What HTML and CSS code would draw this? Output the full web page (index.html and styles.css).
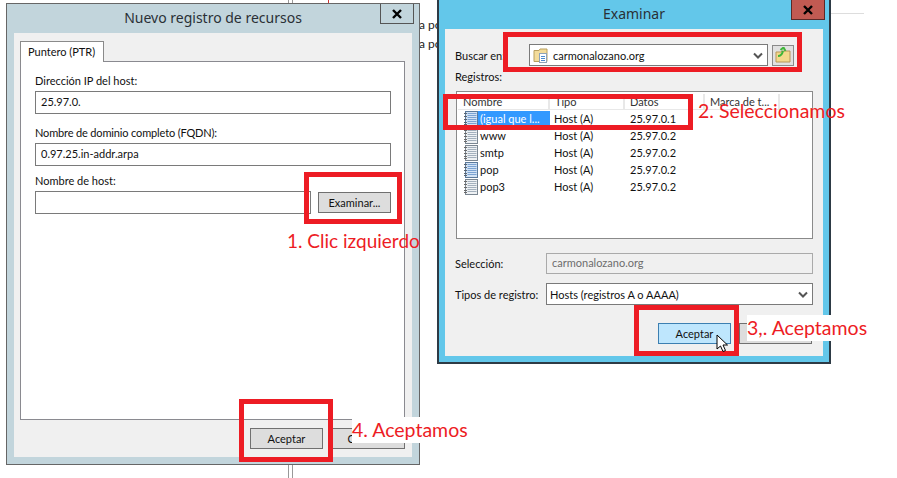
FILE: index.html
```html
<!DOCTYPE html>
<html lang="es">
<head>
<meta charset="UTF-8" />
<meta name="viewport" content="width=device-width, initial-scale=1" />
<title>Nuevo registro de recursos</title>
<link rel="stylesheet" href="styles.css">
</head>
<body>
  <svg class="defs" width="0" height="0" aria-hidden="true">
    <symbol id="rec" viewBox="0 0 14 16">
      <rect x="1.500" y="0.500" width="12" height="15" fill="#eef1f4" stroke="#7a8692"/>
      <path d="M0 2.500h3M0 5.500h3M0 8.500h3M0 11.500h3M0 13.500h3" stroke="#6a6a6a"/>
      <path d="M3.500 2.500h9M3.500 4.500h9M3.500 6.500h9M3.500 8.500h9M3.500 10.500h9M3.500 12.500h9" stroke="#a3b0bd"/>
    </symbol>
    <symbol id="rec-blue" viewBox="0 0 14 16">
      <rect x="1.500" y="0.500" width="12" height="15" fill="#d3e3f5" stroke="#5b7a9c"/>
      <path d="M0 2.500h3M0 5.500h3M0 8.500h3M0 11.500h3M0 13.500h3" stroke="#5a6470"/>
      <path d="M3.500 2.500h9M3.500 4.500h9M3.500 6.500h9M3.500 8.500h9M3.500 10.500h9M3.500 12.500h9" stroke="#7ba3d3"/>
    </symbol>
    <symbol id="chev" viewBox="0 0 10 7">
      <path d="M1 1.500l4 4 4-4" fill="none" stroke="#555" stroke-width="2"/>
    </symbol>
  </svg>

  <!-- what shows of the page behind the dialogs -->
  <div class="behind">
    <span class="bg-text bg-dns">DNS</span>
    <span class="bg-vline bg-vline-top"></span>
    <span class="bg-vline bg-vline-bottom"></span>
    <span class="bg-text bg-n">N</span>
    <span class="bg-tick"></span>
    <span class="bg-text bg-line1">a por</span>
    <span class="bg-text bg-line2">a por</span>
    <span class="bg-rule"></span>
  </div>

  <section class="window win-record">
    <header class="titlebar">
      <h2>Nuevo registro de recursos</h2>
      <span class="close"><svg width="12" height="10" viewBox="0 0 12 10"><path d="M2 1l8 8M10 1l-8 8" stroke="#000" stroke-width="2.400"/></svg></span>
    </header>
    <div class="body">
      <div class="tabs"><span class="tab">Puntero (PTR)</span></div>
      <div class="panel">
        <label class="lbl">Dirección IP del host:</label>
        <div class="field">25.97.0.</div>
        <label class="lbl lbl-2">Nombre de dominio completo (FQDN):</label>
        <div class="field">0.97.25.in-addr.arpa</div>
        <label class="lbl lbl-3">Nombre de host:</label>
        <div class="host-row">
          <div class="field field-host"></div>
          <button class="btn btn-browse">Examinar...</button>
        </div>
      </div>
      <div class="footer">
        <button class="btn">Aceptar</button>
        <button class="btn">Cancelar</button>
      </div>
    </div>
  </section>

  <section class="window win-browse">
    <header class="titlebar">
      <h2>Examinar</h2>
      <span class="close close-red"><svg width="12" height="10" viewBox="0 0 12 10"><path d="M2 1l8 8M10 1l-8 8" stroke="#000" stroke-width="2.400"/></svg></span>
    </header>
    <div class="body body-browse">
      <div class="look-row">
        <span class="look-label">Buscar en:</span>
        <div class="combo">
          <svg class="folder" width="17" height="17" viewBox="0 0 17 17">
            <path d="M1 3.500h5l1-1.500h7v12.500H1z" fill="#f3dc9b" stroke="#b99f5e"/>
            <rect x="6.500" y="6.500" width="7" height="9" fill="#fff" stroke="#8ea3b8"/>
            <path d="M8 9.500h4M8 11.500h4M8 13.500h4" stroke="#4a8ad0"/>
          </svg>
          <span class="combo-text">carmonalozano.org</span>
          <svg class="chev" width="10" height="7"><use href="#chev"/></svg>
        </div>
        <span class="up-btn">
          <svg width="16" height="16" viewBox="0 0 16 16">
            <path d="M1 5h5l1-1h8v11H1z" fill="#f4d98c" stroke="#b7975a"/>
            <path d="M3 9c2 0 4-1 5-5M5.500 3l3-2.500L10.500 4" fill="none" stroke="#3fb53a" stroke-width="2"/>
          </svg>
        </span>
      </div>
      <div class="list-label">Registros:</div>
      <div class="list">
        <div class="list-head">
          <span>Nombre</span><span>Tipo</span><span>Datos</span><span>Marca de t...</span>
        </div>
        <div class="list-row">
          <svg width="14" height="16"><use href="#rec-blue"/></svg><span class="name selected">(igual que l...</span><span>Host (A)</span><span>25.97.0.1</span>
        </div>
        <div class="list-row">
          <svg width="14" height="16"><use href="#rec"/></svg><span class="name">www</span><span>Host (A)</span><span>25.97.0.2</span>
        </div>
        <div class="list-row">
          <svg width="14" height="16"><use href="#rec"/></svg><span class="name">smtp</span><span>Host (A)</span><span>25.97.0.2</span>
        </div>
        <div class="list-row">
          <svg width="14" height="16"><use href="#rec-blue"/></svg><span class="name">pop</span><span>Host (A)</span><span>25.97.0.2</span>
        </div>
        <div class="list-row">
          <svg width="14" height="16"><use href="#rec"/></svg><span class="name">pop3</span><span>Host (A)</span><span>25.97.0.2</span>
        </div>
      </div>
      <div class="form-row form-sel">
        <span>Selección:</span>
        <div class="field field-off">carmonalozano.org</div>
      </div>
      <div class="form-row form-type">
        <span>Tipos de registro:</span>
        <div class="combo combo-type">
          <span class="combo-text">Hosts (registros A o AAAA)</span>
          <svg class="chev" width="10" height="7"><use href="#chev"/></svg>
        </div>
      </div>
      <div class="footer footer-browse">
        <button class="btn btn-hover">Aceptar</button>
        <button class="btn">Cancelar</button>
      </div>
    </div>
  </section>

  <!-- annotations painted on top of the screenshot -->
  <div class="mark mark-browse"></div>
  <div class="mark mark-ok-left"></div>
  <div class="mark mark-look"></div>
  <div class="mark mark-row"></div>
  <div class="mark mark-ok-right"></div>

  <span class="note note-1">1. Clic izquierdo</span>
  <span class="note note-2">2. Seleccionamos</span>
  <span class="note note-3">3,. Aceptamos</span>
  <span class="note note-4">4. Aceptamos</span>

  <svg class="cursor" width="13" height="18" viewBox="0 0 13 18">
    <path d="M1 1v14l3.500-3 2.500 5.500 2.500-1-2.500-5.500h4.500z" fill="#fff" stroke="#000"/>
  </svg>
</body>
</html>
```

FILE: styles.css
```css
* {
  box-sizing: border-box;
}

html, body {
  margin: 0;
  height: 100%;
  overflow: hidden;
}

body {
  position: relative;
  background: #fff;
  font-family: Lato, "Open Sans", sans-serif;
  font-size: 11px;
  color: #111;
}

.defs {
  position: absolute;
}

/* page behind */
.bg-text {
  position: absolute;
  font-size: 12px;
  line-height: 16px;
  color: #222;
}
.bg-dns { left: 7px; top: -12px; }
.bg-n { left: 301px; top: -12px; }
.bg-line1 { left: 419px; top: 17px; }
.bg-line2 { left: 419px; top: 36px; }

.bg-vline {
  position: absolute;
  left: 288px;
  width: 5px;
  border-left: 1px solid #999;
  border-right: 1px solid #999;
}
.bg-vline-top { top: 0; height: 3px; }
.bg-vline-bottom { top: 464px; height: 14px; }

.bg-tick {
  position: absolute;
  left: 328px;
  top: 0;
  width: 1px;
  height: 3px;
  background: #c33;
}

.bg-rule {
  position: absolute;
  left: 831px;
  top: 13px;
  width: 33px;
  height: 1px;
  background: #ddd;
}

/* windows */
.window {
  position: absolute;
  display: flex;
  flex-direction: column;
}

.win-record {
  left: 6px;
  top: 3px;
  width: 414px;
  height: 462px;
  padding: 0 7px 7px;
  background: #c2d5dc;
  border: 1px solid #666;
}

.win-browse {
  left: 437px;
  top: -2px;
  width: 394px;
  height: 366px;
  padding: 0 6px 6px;
  background: #63c7ea;
  border: 2px solid #2d3a45;
}

.titlebar {
  height: 29px;
  flex: none;
  padding-bottom: 2px;
  display: flex;
  align-items: center;
  justify-content: center;
}

.titlebar h2 {
  margin: 0;
  font-family: "Noto Sans", sans-serif;
  font-size: 14px;
  font-weight: 400;
  color: #2a3036;
}

.close {
  position: absolute;
  right: 5px;
  top: 0;
  width: 34px;
  height: 20px;
  display: flex;
  align-items: center;
  justify-content: center;
  border: 1px solid #555;
  border-top: none;
}

.close-red {
  right: 4px;
  background: #c15a52;
  border-color: #5a2a28;
}

.body {
  flex: 1;
  display: flex;
  flex-direction: column;
  background: #f0f0f0;
}

.tabs {
  padding: 8px 0 0 6px;
  height: 29px;
  flex: none;
}

.tab {
  display: block;
  position: relative;
  z-index: 1;
  width: 84px;
  height: 21px;
  line-height: 19px;
  padding-left: 7px;
  background: #fff;
  border: 1px solid #8a8a8a;
  border-bottom: none;
}

.panel {
  flex: 1;
  margin: -1px 7px 0 6px;
  padding: 11px 13px 0 14px;
  background: #fff;
  border: 1px solid #8a8a90;
}

.lbl {
  display: block;
  height: 17px;
  line-height: 16px;
  margin-bottom: 1px;
}
.lbl-2 { margin-top: 11px; letter-spacing: -0.15px; }
.lbl-3 { margin-top: 7px; }

.field {
  height: 23px;
  line-height: 20px;
  padding: 0 5px;
  background: #fff;
  border: 1px solid #7a7a7a;
}

.host-row {
  display: flex;
  align-items: center;
  gap: 7px;
}

.field-host {
  width: 276px;
}

.btn {
  width: 73px;
  height: 21px;
  padding: 0;
  font: inherit;
  color: #111;
  background: #dddddd;
  border: 1px solid #707070;
}

.footer {
  flex: none;
  height: 37px;
  display: flex;
  justify-content: flex-end;
  gap: 9px;
  padding: 8px 7px 0 0;
}

/* browse dialog */
.body-browse {
  padding: 15px 10px 0;
}

.look-row {
  display: flex;
  align-items: center;
  height: 22px;
}

.look-label {
  width: 74px;
  flex: none;
}

.combo {
  flex: 1;
  height: 22px;
  display: flex;
  align-items: center;
  background: #fff;
  border: 1px solid #7a7a7a;
  padding: 0 4px 0 3px;
}

.combo-text {
  flex: 1;
  padding-left: 3px;
}

.combo-type .combo-text {
  padding-left: 0;
}

.folder {
  flex: none;
}

.up-btn {
  width: 22px;
  height: 21px;
  margin: 0 19px 0 4px;
  flex: none;
  display: flex;
  align-items: center;
  justify-content: center;
  background: #e1e1e1;
  border: 1px solid #8a8a8a;
}

.list-label {
  height: 25px;
  padding-top: 2px;
  line-height: 17px;
}

.list {
  height: 148px;
  margin-left: 1px;
  padding-top: 1px;
  background: #fff;
  border: 1px solid #8a8a8a;
}

.list-head {
  display: grid;
  grid-template-columns: 92px 75px 80px 75px;
  height: 17px;
  padding: 1px 0 0 1px;
  line-height: 15px;
  color: #333;
}

.list-head span {
  padding-left: 5px;
  border-right: 2px solid #e8e8e8;
  border-bottom: 1px solid #e8e8e8;
}

.list-row {
  display: grid;
  grid-template-columns: 14px 72px 76px 80px;
  height: 17px;
  margin-left: 7px;
  line-height: 16px;
  align-items: center;
}

.list-row span:nth-child(3),
.list-row span:nth-child(4) {
  padding-left: 4px;
}

.name {
  padding-left: 2px;
}

.selected {
  background: #3399ff;
  color: #fff;
}

.form-row {
  display: grid;
  grid-template-columns: 91px 1fr;
  align-items: center;
}

.form-sel {
  margin-top: 14px;
}

.form-type {
  margin-top: 9px;
}

.field-off {
  height: 21px;
  line-height: 18px;
  color: #6d6d6d;
  background: #f0f0f0;
  border-color: #aaa;
}

.footer-browse {
  padding: 18px 1px 0 0;
  gap: 8px;
}

.btn-hover {
  background: #bee6fd;
  border-color: #3c7fb1;
}

/* annotations */
.mark {
  position: absolute;
  border: 5px solid #ed1c24;
}
.mark-browse { left: 304px; top: 172px; width: 98px; height: 52px; }
.mark-ok-left { left: 239px; top: 399px; width: 94px; height: 63px; }
.mark-look { left: 503px; top: 32px; width: 299px; height: 40px; }
.mark-row { left: 443px; top: 94px; width: 250px; height: 36px; }
.mark-ok-right { left: 634px; top: 305px; width: 105px; height: 51px; }

.note {
  position: absolute;
  font-family: Lato, "Open Sans", sans-serif;
  font-size: 19.500px;
  line-height: 26px;
  color: #ed1c24;
  white-space: nowrap;
}
.note-1 { left: 287px; top: 228px; font-size: 19px; }
.note-2 { left: 698px; top: 98px; }
.note-3 { left: 747px; top: 315px; padding-right: 4px; background: #fff; }
.note-4 { left: 352px; top: 417px; background: #fff; }

.cursor {
  position: absolute;
  left: 716px;
  top: 334px;
}
```
